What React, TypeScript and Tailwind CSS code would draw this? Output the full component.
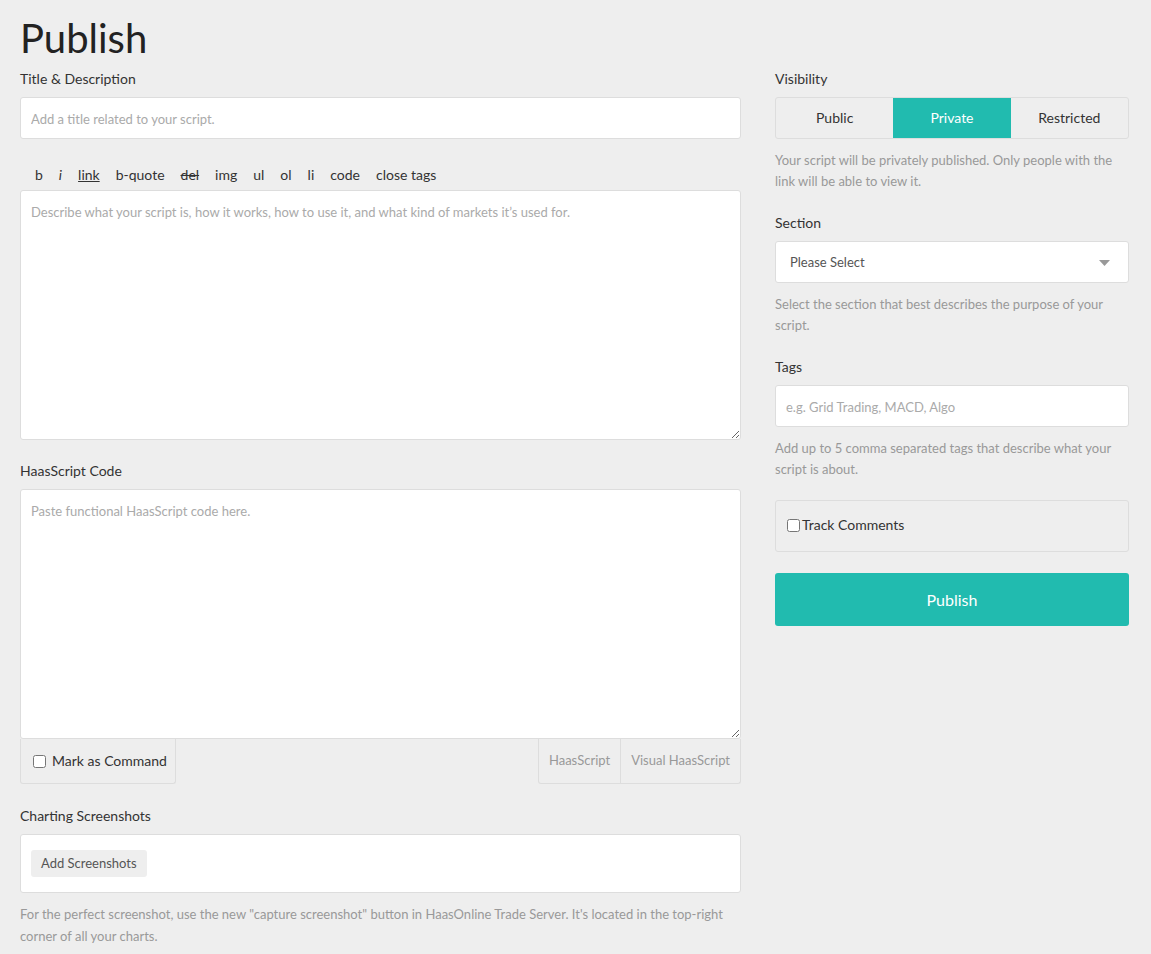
import React from "react";

const TEAL = "bg-[#21bbaf]";

function Label({ children }: { children: React.ReactNode }) {
  return <div className="text-sm leading-[18px] text-[#333] mb-[9px]">{children}</div>;
}

function Help({ children }: { children: React.ReactNode }) {
  return <p className="mt-[11px] text-[13px] leading-[21px] text-[#999]">{children}</p>;
}

const toolbar = ["b", "i", "link", "b-quote", "del", "img", "ul", "ol", "li", "code", "close tags"];

function ToolItem({ name }: { name: string }) {
  let cls = "";
  if (name === "i") cls = "italic";
  if (name === "link") cls = "underline";
  if (name === "del") cls = "line-through";
  return <span className={cls}>{name}</span>;
}

export default function App() {
  return (
    <div
      className="min-h-screen bg-[#eeeeee] px-5 pt-[14px] pb-4 text-[#333]"
      style={{ fontFamily: "Lato, 'Open Sans', sans-serif" }}
    >
      <h1 className="text-[40px] leading-[48px] text-[#222] font-normal">Publish</h1>

      <div className="mt-2 flex gap-[34px]">
        {/* left column */}
        <div className="w-[721px] shrink-0">
          <Label>Title &amp; Description</Label>
          <input
            className="w-full h-[42px] bg-white border border-[#ddd] rounded-[3px] px-[10px] pt-[1px] text-[13px] placeholder:text-[#aaa] outline-none"
            placeholder="Add a title related to your script."
          />

          <div className="mt-[26px] mb-[5px] flex gap-[16px] px-[15px] text-sm leading-5 text-[#333]">
            {toolbar.map((t) => (
              <ToolItem key={t} name={t} />
            ))}
          </div>
          <textarea
            className="block w-full h-[250px] bg-white border border-[#ddd] rounded-[3px] px-[10px] py-[12px] text-[13px] leading-[18px] placeholder:text-[#aaa] outline-none"
            placeholder="Describe what your script is, how it works, how to use it, and what kind of markets it’s used for."
          />

          <div className="mt-[22px]">
            <Label>HaasScript Code</Label>
          </div>
          <textarea
            className="block w-full h-[250px] bg-white border border-[#ddd] rounded-[3px] px-[10px] py-[12px] text-[13px] leading-[18px] placeholder:text-[#aaa] outline-none"
            placeholder="Paste functional HaasScript code here."
          />
          <div className="flex justify-between">
            <label className="flex items-center gap-[6px] h-[45px] pl-3 pr-[8px] border border-t-0 border-[#ddd] rounded-b-[3px] text-sm text-[#333]">
              <input type="checkbox" className="w-[13px] h-[13px]" />
              Mark as Command
            </label>
            <div className="flex">
              <div className="h-[45px] px-[10px] flex items-center border border-t-0 border-[#ddd] rounded-bl-[3px] text-[13px] text-[#999]">
                HaasScript
              </div>
              <div className="h-[45px] px-[10px] flex items-center border border-t-0 border-l-0 border-[#ddd] rounded-br-[3px] text-[13px] text-[#999]">
                Visual HaasScript
              </div>
            </div>
          </div>

          <div className="mt-[23px]">
            <Label>Charting Screenshots</Label>
          </div>
          <div className="bg-white border border-[#ddd] rounded-[3px] px-[10px] py-[15px]">
            <button className="h-[27px] px-[10px] bg-[#eee] rounded-[3px] text-[13px] text-[#555]">
              Add Screenshots
            </button>
          </div>
          <p className="mt-[10px] text-[13px] leading-[22px] text-[#999]">
            For the perfect screenshot, use the new "capture screenshot" button in HaasOnline Trade Server. It's
            located in the top-right corner of all your charts.
          </p>
        </div>

        {/* right column */}
        <div className="w-[354px] shrink-0">
          <Label>Visibility</Label>
          <div className="flex h-[42px] border border-[#ddd] rounded-[3px] overflow-hidden text-sm">
            <div className="flex-1 flex items-center justify-center text-[#333]">Public</div>
            <div className={`flex-1 flex items-center justify-center text-white ${TEAL}`}>Private</div>
            <div className="flex-1 flex items-center justify-center text-[#333]">Restricted</div>
          </div>
          <Help>Your script will be privately published. Only people with the link will be able to view it.</Help>

          <div className="mt-[22px]">
            <Label>Section</Label>
          </div>
          <div className="h-[42px] bg-white border border-[#ddd] rounded-[3px] pl-[14px] pr-[18px] pt-[2px] flex items-center justify-between">
            <span className="text-[13px] text-[#555]">Please Select</span>
            <svg width="11" height="6" viewBox="0 0 11 6">
              <path d="M0 0 L11 0 L5.5 6 Z" fill="#999" />
            </svg>
          </div>
          <Help>Select the section that best describes the purpose of your script.</Help>

          <div className="mt-[22px]">
            <Label>Tags</Label>
          </div>
          <input
            className="w-full h-[42px] bg-white border border-[#ddd] rounded-[3px] px-[10px] pt-[1px] text-[13px] placeholder:text-[#aaa] outline-none"
            placeholder="e.g. Grid Trading, MACD, Algo"
          />
          <Help>Add up to 5 comma separated tags that describe what your script is about.</Help>

          <label className="mt-[20px] flex items-start gap-[2px] h-[52px] pt-[16px] px-[11px] border border-[#ddd] rounded-[3px] text-sm leading-[16px] text-[#333]">
            <input type="checkbox" className="w-[13px] h-[13px] mt-[2px]" />
            Track Comments
          </label>

          <button className={`mt-[21px] w-full h-[53px] ${TEAL} rounded-[3px] text-white text-base`}>
            Publish
          </button>
        </div>
      </div>
    </div>
  );
}
